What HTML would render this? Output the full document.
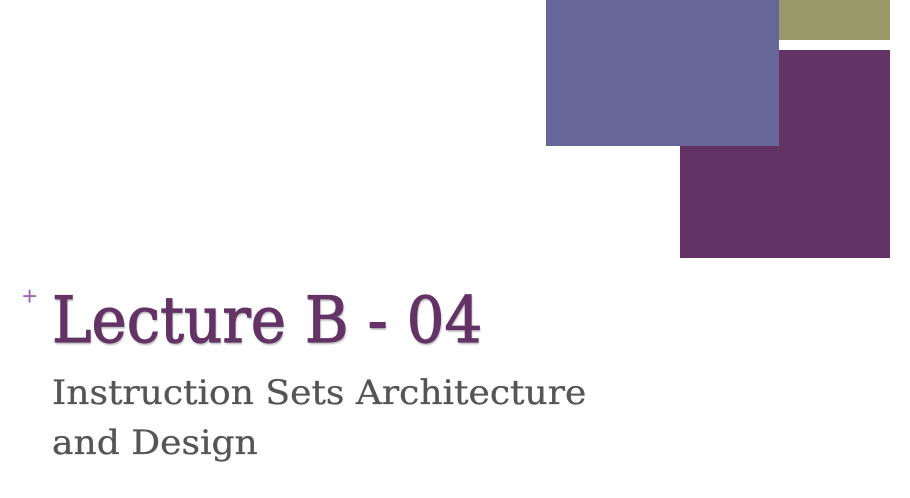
<!DOCTYPE html>
<html><head><style>
html,body{margin:0;padding:0;width:910px;height:498px;background:#fff;overflow:hidden;position:relative}
.r{position:absolute}
.t{position:absolute;font-family:"DejaVu Serif","Liberation Serif",serif;white-space:nowrap;transform-origin:0 0}
</style></head><body>
<div class="r" style="left:779px;top:0;width:111px;height:40px;background:#999868"></div>
<div class="r" style="left:680px;top:50px;width:210px;height:208px;background:#643366"></div>
<div class="r" style="left:546px;top:0;width:233px;height:146px;background:#666699"></div>
<div class="t" style="left:22px;top:281px;font-size:26px;color:#a064b4;font-family:'Liberation Sans',sans-serif;font-weight:300">+</div>
<div class="t" style="left:52px;top:283px;font-size:64px;line-height:76px;color:#643366;-webkit-text-stroke:1.2px #643366;transform:scaleX(0.93);text-shadow:1px 2px 2px rgba(0,0,0,0.3)">Lecture B - 04</div>
<div class="t" style="left:52px;top:368px;font-size:34px;line-height:50px;color:#555;-webkit-text-stroke:0.3px #555;transform:scaleX(1.06)">Instruction Sets Architecture<br>and Design</div>
</body></html>
